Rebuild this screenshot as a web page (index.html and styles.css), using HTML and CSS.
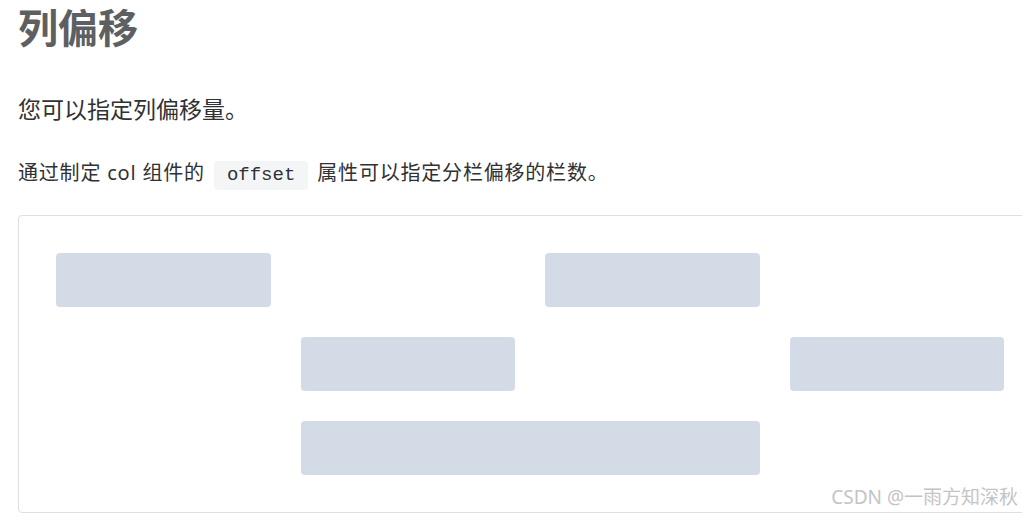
FILE: index.html
```html
<!DOCTYPE html>
<html lang="zh-CN">
<head>
  <meta charset="UTF-8">
  <meta name="viewport" content="width=device-width, initial-scale=1.0">
  <title>列偏移</title>
  <link rel="stylesheet" href="styles.css">
</head>
<body>
  <div class="page">
    <h2 class="title">列偏移</h2>
    <p class="lead">您可以指定列偏移量。</p>
    <p class="desc">通过制定 col 组件的 <code>offset</code> 属性可以指定分栏偏移的栏数。</p>

    <div class="demo">
      <div class="row">
        <div class="col span-6"><div class="cell"></div></div>
        <div class="col span-6 offset-6"><div class="cell"></div></div>
      </div>
      <div class="row">
        <div class="col span-6 offset-6"><div class="cell"></div></div>
        <div class="col span-6 offset-6"><div class="cell"></div></div>
      </div>
      <div class="row">
        <div class="col span-12 offset-6"><div class="cell"></div></div>
      </div>
      <span class="watermark">CSDN @一雨方知深秋</span>
    </div>
  </div>
</body>
</html>
```

FILE: styles.css
```css
html, body {
  overflow: hidden;
}
body {
  margin: 0;
  font-family: 'Noto Sans', 'Noto Sans CJK SC', sans-serif;
  color: #303133;
  background: #fff;
}
.page {
  padding-left: 18px;
}
.title {
  margin: 5px 0 0;
  font-size: 40px;
  line-height: 46px;
  font-weight: 700;
  color: #5e5f63;
}
.lead {
  margin: 43px 0 0;
  font-size: 23px;
  line-height: 30px;
  color: #303133;
}
.desc {
  margin: 34px 0 0;
  font-size: 20px;
  line-height: 30px;
  letter-spacing: 0.8px;
  color: #303133;
}
.desc code {
  display: inline-block;
  padding: 0 13px;
  margin: 0 3px;
  line-height: 29px;
  letter-spacing: 0;
  font-family: 'Liberation Mono', 'DejaVu Sans Mono', monospace;
  font-size: 19px;
  background: #f4f5f7;
  border-radius: 4px;
  color: #303133;
}
.demo {
  position: relative;
  box-sizing: border-box;
  width: 1024px;
  margin-top: 25px;
  padding: 37px;
  border: 1px solid #dcdfe6;
  border-radius: 4px;
}
.row {
  display: flex;
  margin: 0 -15px 30px;
}
.row:last-of-type {
  margin-bottom: 0;
}
.col {
  box-sizing: border-box;
  padding: 0 15px;
}
.cell {
  height: 54px;
  background: #d3dce6;
  border-radius: 4px;
}
.span-6 { width: 25%; }
.span-12 { width: 50%; }
.offset-6 { margin-left: 25%; }
.watermark {
  position: absolute;
  right: 23px;
  bottom: 2px;
  font-size: 19px;
  color: #c4c4c4;
}
```
